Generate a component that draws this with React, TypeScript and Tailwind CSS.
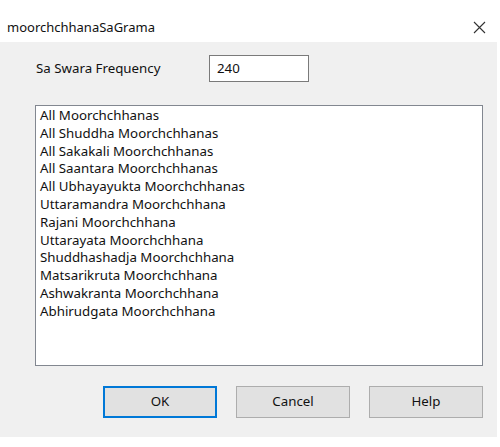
const items = [
  "All Moorchchhanas",
  "All Shuddha Moorchchhanas",
  "All Sakakali Moorchchhanas",
  "All Saantara Moorchchhanas",
  "All Ubhayayukta Moorchchhanas",
  "Uttaramandra Moorchchhana",
  "Rajani Moorchchhana",
  "Uttarayata Moorchchhana",
  "Shuddhashadja Moorchchhana",
  "Matsarikruta Moorchchhana",
  "Ashwakranta Moorchchhana",
  "Abhirudgata Moorchchhana",
];

export default function App() {
  return (
    <div className="w-[500px] h-[447px] bg-white flex flex-col font-['Noto_Sans',sans-serif] text-[13.3px] text-[#111]">
      {/* title bar */}
      <div className="h-[42px] flex items-center justify-between pl-[7px] pr-[14px] pt-[13px] shrink-0">
        <span className="text-[13px]">moorchchhanaSaGrama</span>
        <svg width="13" height="13" viewBox="0 0 13 13">
          <path d="M1 1 L12 12 M12 1 L1 12" stroke="#333" strokeWidth="1.1" />
        </svg>
      </div>

      {/* body */}
      <div className="w-[497px] h-[395px] bg-[#f0f0f0] flex flex-col pt-[13px]">
        <div className="flex items-center h-[27px]">
          <span className="ml-[36px] w-[173px]">Sa Swara Frequency</span>
          <div className="w-[100px] h-[27px] bg-white border border-[#7a7a7a] flex items-center pl-[7px]">
            240
          </div>
        </div>

        <div className="ml-[35px] mt-[23px] w-[448px] h-[261px] bg-white border border-[#828790] pt-[1px] pl-[4px] flex flex-col">
          {items.map((t) => (
            <div key={t} className="h-[17.8px] leading-[17.8px]">
              {t}
            </div>
          ))}
        </div>

        <div className="flex ml-[103px] mt-[20px] gap-[19px]">
          <button className="w-[114px] h-[32px] bg-[#e1e1e1] border-2 border-[#0078d7] flex items-center justify-center">
            OK
          </button>
          <button className="w-[114px] h-[32px] bg-[#e1e1e1] border border-[#adadad] flex items-center justify-center">
            Cancel
          </button>
          <button className="w-[114px] h-[32px] bg-[#e1e1e1] border border-[#adadad] flex items-center justify-center">
            Help
          </button>
        </div>
      </div>
    </div>
  );
}
